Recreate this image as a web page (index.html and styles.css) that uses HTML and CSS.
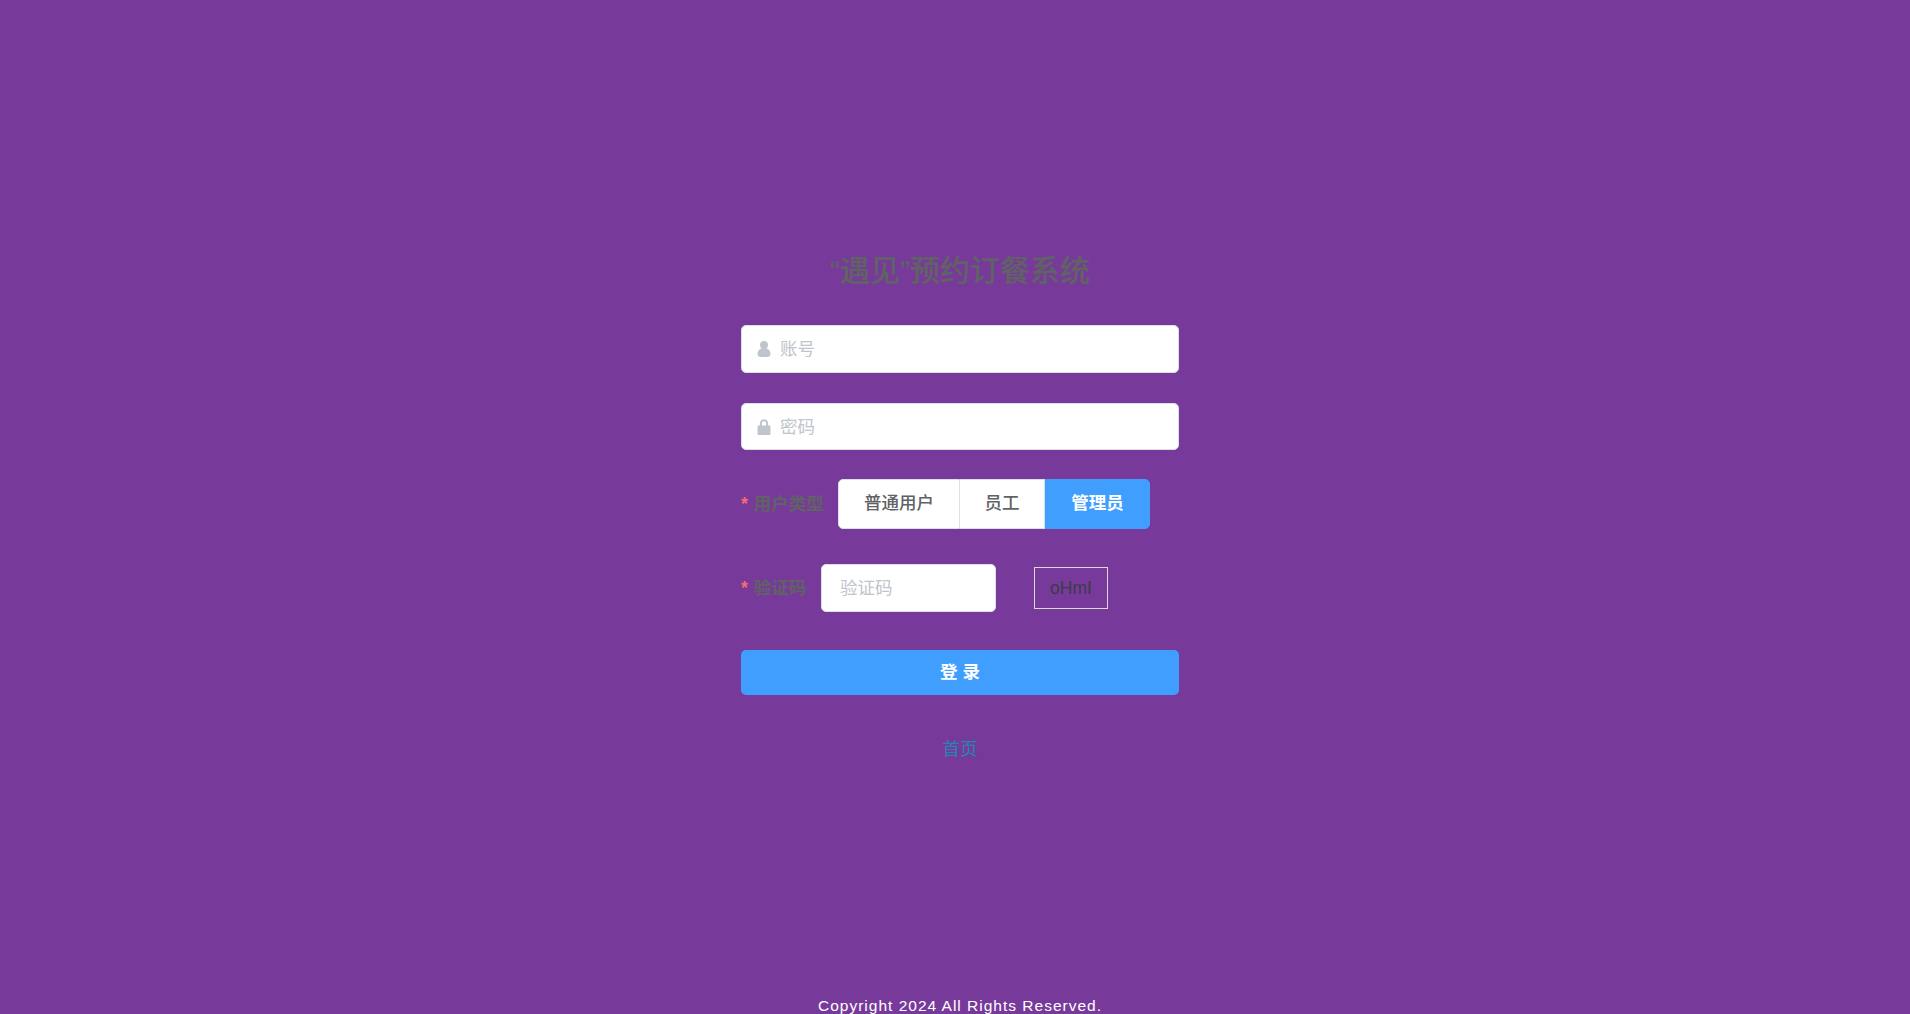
FILE: index.html
```html
<!DOCTYPE html>
<html lang="zh-CN">
<head>
<meta charset="utf-8">
<title>“遇见”预约订餐系统</title>
<link rel="stylesheet" href="styles.css">
</head>
<body>
<main class="page">
  <form class="login">
    <h1 class="title">“遇见”预约订餐系统</h1>
    <div class="field field-account">
      <svg class="icon" viewBox="0 0 14 16"><circle cx="7" cy="4" r="4"/><path d="M0.500 12.500C0.500 9.500 3 7 7 7s6.500 2.500 6.500 5.500c0 2-1 3.500-3 3.500h-7c-2 0-3-1.500-3-3.500z"/></svg>
      <span class="placeholder">账号</span>
    </div>
    <div class="field field-password">
      <svg class="icon" viewBox="0 0 14 16"><path fill-rule="evenodd" d="M2.800 6.500V4.300C2.800 1.900 4.600.2 7 .2s4.200 1.700 4.200 4.100v2.200h1.100c.7 0 1.200.5 1.200 1.200v7.100c0 .7-.5 1.200-1.200 1.200H1.700c-.7 0-1.200-.5-1.200-1.200V7.700c0-.7.5-1.200 1.200-1.200zm2.100 0h4.200V4.300C9.100 3 8.200 2.200 7 2.200S4.900 3 4.900 4.300z"/></svg>
      <span class="placeholder">密码</span>
    </div>
    <div class="row row-type">
      <span class="label"><i class="star">*</i> 用户类型</span>
      <div class="segments">
        <span class="segment segment-user">普通用户</span>
        <span class="segment segment-staff">员工</span>
        <span class="segment segment-admin">管理员</span>
      </div>
    </div>
    <div class="row row-code">
      <span class="label"><i class="star">*</i> 验证码</span>
      <div class="code-input"><span class="placeholder">验证码</span></div>
      <div class="captcha">oHmI</div>
    </div>
    <button class="submit" type="button">登 录</button>
    <a class="home" href="#">首页</a>
  </form>
  <footer class="copyright">Copyright 2024 All Rights Reserved.</footer>
</main>
</body>
</html>
```
FILE: styles.css
```css
* { box-sizing: border-box; }
html, body { margin: 0; height: 100%; overflow: hidden; }
body {
  background: #783a9a;
  font-family: "Liberation Sans", "Noto Sans CJK SC", sans-serif;
  font-size: 17.500px;
}
.page {
  width: 1920px;
  height: 1014px;
  display: flex;
  flex-direction: column;
  align-items: center;
  padding-top: 250px;
}
.login {
  width: 438px;
  display: flex;
  flex-direction: column;
}
.title {
  margin: 0 0 35px;
  height: 40px;
  line-height: 42px;
  text-align: center;
  font-size: 30px;
  font-weight: 500;
  color: #606266;
  -webkit-text-stroke: 0.2px #606266;
}
.field {
  display: flex;
  align-items: center;
  gap: 9px;
  background: #fff;
  border: 1px solid #dcdfe6;
  border-radius: 5px;
  padding-left: 15px;
}
.field-account { height: 48px; margin-bottom: 30px; }
.field-password { height: 47px; margin-bottom: 29px; }
.icon { width: 14px; height: 16px; fill: #c0c4cc; flex: none; }
.placeholder { color: #c0c4cc; padding-bottom: 3px; }
.row { display: flex; align-items: center; }
.row-type { height: 50px; margin-bottom: 35px; }
.row-code { height: 48px; margin-bottom: 38px; }
.label { color: #606266; font-weight: 700; white-space: nowrap; padding-bottom: 3px; }
.star { color: #f56c6c; font-style: normal; margin-right: 1px; }
.row-type .label { width: 97px; }
.row-code .label { width: 80px; }
.segments { display: flex; height: 50px; width: 312px; }
.segment {
  display: flex;
  align-items: center;
  justify-content: center;
  padding-bottom: 6px;
  background: #fff;
  color: #606266;
  font-weight: 500;
  border: 1px solid #dcdfe6;
}
.segment-user { width: 122px; border-radius: 5px 0 0 5px; }
.segment-staff { width: 85px; border-left: 0; }
.segment-admin {
  width: 105px;
  background: #409eff;
  border-color: #409eff;
  color: #fff;
  font-weight: 700;
  border-radius: 0 5px 5px 0;
}
.code-input {
  width: 175px;
  height: 48px;
  display: flex;
  align-items: center;
  padding-left: 18px;
  background: #fff;
  border: 1px solid #dcdfe6;
  border-radius: 5px;
}
.captcha {
  width: 74px;
  height: 42px;
  margin-left: 38px;
  display: flex;
  align-items: center;
  justify-content: center;
  border: 1px solid #d9d9d9;
  color: #3a3a4a;
}
.submit {
  height: 45px;
  margin: 0 0 40px;
  padding: 0 0 4px;
  border: 0;
  border-radius: 5px;
  background: #409eff;
  color: #fff;
  font: 700 17.500px "Liberation Sans", "Noto Sans CJK SC", sans-serif;
}
.home {
  height: 26px;
  line-height: 28px;
  text-align: center;
  text-decoration: none;
  color: #2484b8;
}
.copyright {
  margin-top: auto;
  height: 17px;
  line-height: 17px;
  color: #fff;
  font-size: 15.500px;
  letter-spacing: 1px;
}
```
